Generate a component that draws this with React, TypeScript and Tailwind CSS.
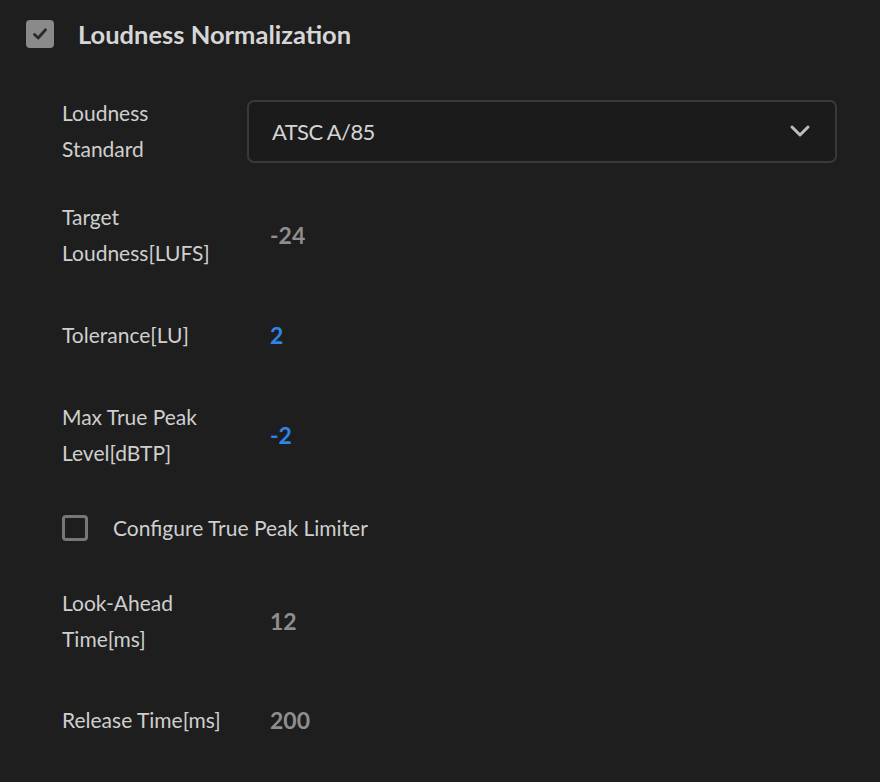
import React, { useState } from 'react';

const font = { fontFamily: 'Lato, "Open Sans", sans-serif' };

const Row: React.FC<{ label: React.ReactNode; children: React.ReactNode; className?: string }> = ({ label, children, className }) => (
  <div className={`flex items-center ${className || ''}`}>
    <div className="w-[185px] shrink-0 text-[21px] leading-[36px] text-[#cfcfcf]">{label}</div>
    {children}
  </div>
);

const Value: React.FC<{ v: string; blue?: boolean }> = ({ v, blue }) => (
  <div className={`pl-[23px] text-[23px] font-bold ${blue ? 'text-[#2d84ea]' : 'text-[#8e8e8e]'}`}>{v}</div>
);

const App: React.FC = () => {
  const [enabled, setEnabled] = useState(true);
  const [limiter, setLimiter] = useState(false);

  return (
    <div className="min-h-[782px] w-[880px] bg-[#1e1e1e]" style={font}>
      <div className="flex items-center pl-[26px] pt-[15px]">
        <button
          onClick={() => setEnabled(!enabled)}
          className="flex h-[28px] w-[28px] items-center justify-center rounded-[4px] bg-[#8a8a8a]"
        >
          {enabled && (
            <svg width="18" height="18" viewBox="0 0 18 18" fill="none">
              <path d="M3.5 9.5 L7.2 13 L14.5 4.8" stroke="#2a2a2a" strokeWidth="2.8" strokeLinecap="round" strokeLinejoin="round" />
            </svg>
          )}
        </button>
        <div className="ml-[24px] text-[25.5px] font-bold text-[#d6d6d6]">Loudness Normalization</div>
      </div>

      <div className="pl-[62px] pr-[43px] pt-[42px]">
        <Row label={<>Loudness<br />Standard</>}>
          <div className="flex h-[63px] flex-1 items-center justify-between rounded-[7px] border-2 border-[#393939] bg-[#1b1b1b] pl-[23px] pr-[24px]">
            <span className="text-[22px] tracking-[-0.6px] text-[#d4d4d4]">ATSC A/85</span>
            <svg width="22" height="14" viewBox="0 0 22 14" fill="none">
              <path d="M3 3 L11 11 L19 3" stroke="#bdbdbd" strokeWidth="3" strokeLinecap="round" strokeLinejoin="round" />
            </svg>
          </div>
        </Row>

        <Row label={<>Target<br />Loudness[LUFS]</>} className="mt-[32px]">
          <Value v="-24" />
        </Row>

        <Row label="Tolerance[LU]" className="mt-[46px]">
          <Value v="2" blue />
        </Row>

        <Row label={<>Max True Peak<br />Level[dBTP]</>} className="mt-[46px]">
          <Value v="-2" blue />
        </Row>

        <div className="mt-[41px] flex items-center">
          <button
            onClick={() => setLimiter(!limiter)}
            className="h-[26px] w-[26px] rounded-[4px] border-[3px] border-[#777777]"
          />
          <span className="ml-[25px] text-[21px] text-[#cfcfcf]">Configure True Peak Limiter</span>
        </div>

        <Row label={<>Look-Ahead<br />Time[ms]</>} className="mt-[41px]">
          <Value v="12" />
        </Row>

        <Row label="Release Time[ms]" className="mt-[45px]">
          <Value v="200" />
        </Row>
      </div>
    </div>
  );
};

export default App;
